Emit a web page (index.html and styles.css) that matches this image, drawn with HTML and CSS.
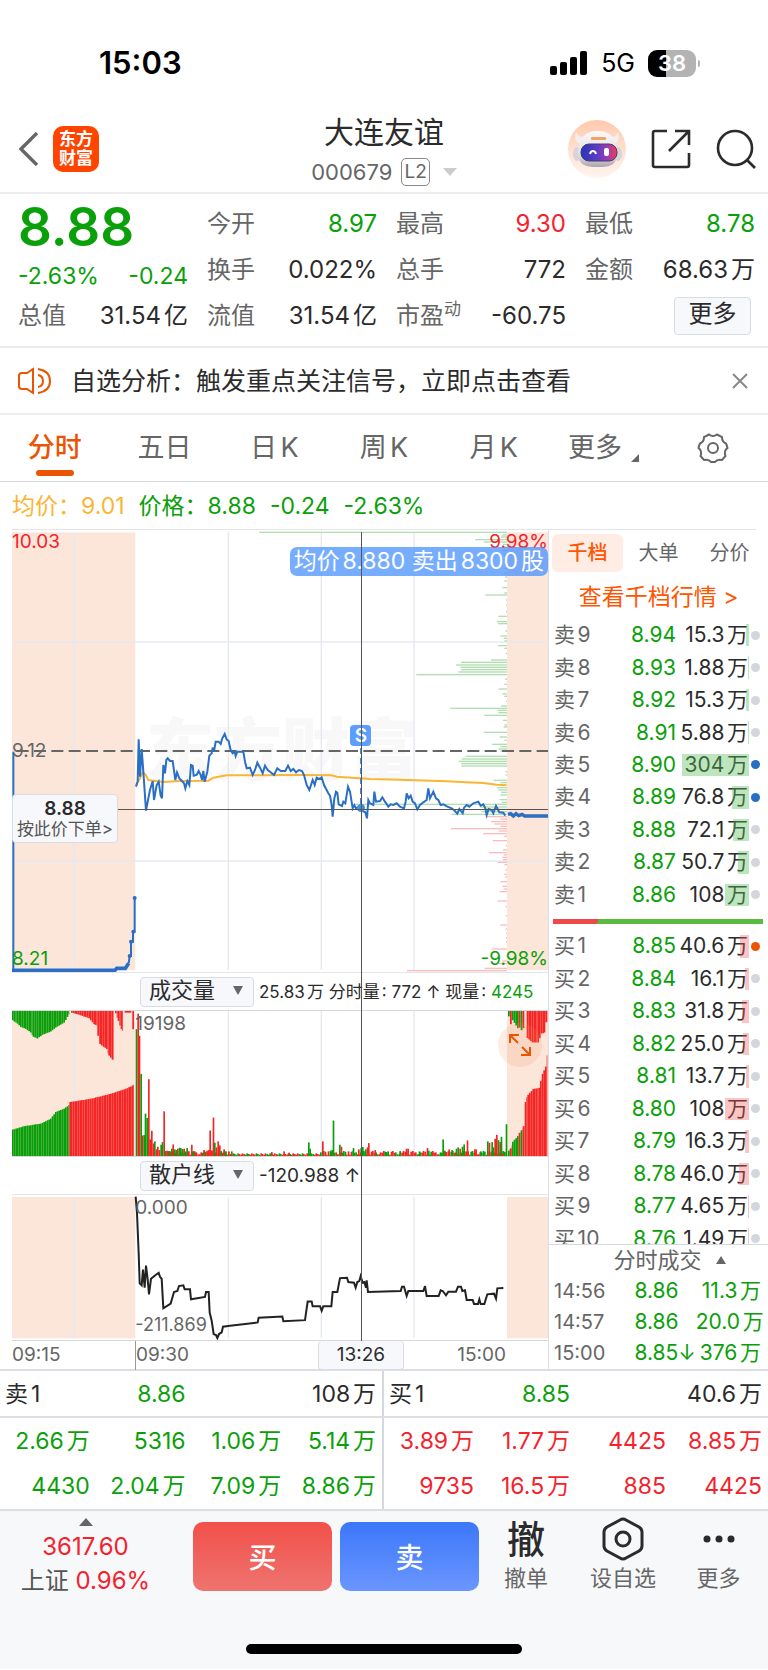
FILE: index.html
```html
<!DOCTYPE html>
<html lang="zh-CN">
<head>
    <meta charset="UTF-8">
    <meta name="viewport" content="width=device-width, initial-scale=1.0">
    <title>大连友谊 000679</title>
    <link rel="stylesheet" href="styles.css">
</head>
<body>
    <div class="status-bar">
        <span class="clock">15:03</span>
        <div class="status-icons">
            <svg width="38" height="24" viewBox="0 0 38 24">
                <rect x="0" y="15" width="7" height="9" rx="2"/>
                <rect x="10" y="11" width="7" height="13" rx="2"/>
                <rect x="20" y="6" width="7" height="18" rx="2"/>
                <rect x="30" y="0" width="7" height="24" rx="2"/>
            </svg>
            <span class="network">5G</span>
            <span class="battery">38</span>
        </div>
    </div>

    <header class="header">
        <div class="header-left">
            <a href="#" class="back" aria-label="返回">
                <svg width="20" height="34" viewBox="0 0 20 34" fill="none" stroke="#666" stroke-width="3.4">
                    <path d="M18 1 2 17l16 16"/>
                </svg>
            </a>
            <a href="#" class="logo"><span>东方</span><span>财富</span></a>
        </div>
        <div class="stock-name">
            <h1>大连友谊</h1>
            <div class="stock-code">000679 <span class="level">L2</span><i class="caret-down"></i></div>
        </div>
        <div class="header-right">
            <a href="#" aria-label="智能助手">
                <svg width="58" height="58" viewBox="0 0 58 58">
                    <defs>
                        <linearGradient id="halo" x1="0" y1="0" x2="0" y2="1">
                            <stop offset="0" stop-color="#ffc9ad"/>
                            <stop offset="1" stop-color="#fff6f1"/>
                        </linearGradient>
                        <linearGradient id="helmet" x1="0" y1="0" x2="0" y2="1">
                            <stop offset="0" stop-color="#fbfafa"/>
                            <stop offset=".7" stop-color="#dedbdd"/>
                            <stop offset="1" stop-color="#aaa5aa"/>
                        </linearGradient>
                        <linearGradient id="visor" x1="0" y1="0" x2="1" y2="0">
                            <stop offset="0" stop-color="#2636b4"/>
                            <stop offset=".45" stop-color="#5a3cc4"/>
                            <stop offset=".75" stop-color="#a03bb0"/>
                            <stop offset="1" stop-color="#ef3f4c"/>
                        </linearGradient>
                    </defs>
                    <circle cx="29" cy="29" r="29" fill="url(#halo)"/>
                    <path d="M8 12c-2 6 0 12 6 12l5-9c-5 3-9 2-11-3zM50 12c2 6 0 12-6 12l-5-9c5 3 9 2 11-3z" fill="#f3eff0"/>
                    <ellipse cx="9" cy="34" rx="4" ry="7" fill="#d8d4d8"/>
                    <ellipse cx="50" cy="34" rx="4" ry="7" fill="#d8d4d8"/>
                    <path d="M10 32c0-13 7-21 20-21s19 8 19 21-6 15-19 15-20-2-20-15z" fill="url(#helmet)"/>
                    <rect x="23" y="17" width="15" height="3" rx="1" fill="#f2a263"/>
                    <rect x="13" y="24" width="36" height="17" rx="8" fill="url(#visor)" stroke="#493a76"/>
                    <path d="M22 34c1-4 5-4 6 0" fill="none" stroke="#fff" stroke-width="2"/>
                    <rect x="36" y="28" width="5" height="8" rx="2" fill="#fff"/>
                </svg>
            </a>
            <a href="#" aria-label="分享">
                <svg width="40" height="40" viewBox="0 0 40 40" fill="none" stroke="#2b2b2b" stroke-width="2.6">
                    <path d="M16 2H4Q2 2 2 4v32q0 2 2 2h32q2 0 2-2V24M24 2h14v14M38 2 18 22"/>
                </svg>
            </a>
            <a href="#" aria-label="搜索">
                <svg width="40" height="40" viewBox="0 0 40 40" fill="none" stroke="#2b2b2b" stroke-width="2.6">
                    <circle cx="19" cy="19" r="17"/>
                    <path d="m31 31 8 8"/>
                </svg>
            </a>
        </div>
    </header>

    <section class="quote">
        <div class="quote-main">
            <strong>8.88</strong>
            <div class="quote-change"><span>-2.63%</span><span>-0.24</span></div>
        </div>
        <dl class="q-open"><dt>今开</dt><dd class="down">8.97</dd></dl>
        <dl><dt>最高</dt><dd class="up">9.30</dd></dl>
        <dl><dt>最低</dt><dd class="down">8.78</dd></dl>
        <dl><dt>换手</dt><dd>0.022%</dd></dl>
        <dl><dt>总手</dt><dd>772</dd></dl>
        <dl><dt>金额</dt><dd>68.63万</dd></dl>
        <dl><dt>总值</dt><dd>31.54亿</dd></dl>
        <dl><dt>流值</dt><dd>31.54亿</dd></dl>
        <dl><dt>市盈<sup>动</sup></dt><dd>-60.75</dd></dl>
        <button type="button" class="more-btn">更多</button>
    </section>

    <div class="notice">
        <svg width="34" height="30" viewBox="0 0 34 30" fill="none" stroke="#ea5504" stroke-width="2">
            <path d="M15 3v24l-6-4H4q-3 0-3-3V10q0-3 3-3h5z"/>
            <path d="M20 9q5 1 5 6t-5 6M20 3q12 2 12 12T20 27"/>
        </svg>
        <a href="#">自选分析：触发重点关注信号，立即点击查看</a>
        <button type="button" aria-label="关闭">
            <svg width="16" height="16" viewBox="0 0 16 16" stroke="#888" stroke-width="2"><path d="m1 1 14 14M15 1 1 15"/></svg>
        </button>
    </div>

    <nav class="tabs">
        <a href="#" class="active">分时</a>
        <a href="#">五日</a>
        <a href="#">日K</a>
        <a href="#">周K</a>
        <a href="#">月K</a>
        <a href="#">更多<i class="corner"></i></a>
        <a href="#" aria-label="设置">
            <svg width="32" height="30" viewBox="0 0 32 30" fill="none" stroke="#666" stroke-width="2">
                <path d="M12 1.500q4 3 8 0l5 2.500q0 5 4 6.500 1 2 1.500 4.500-4 3-2 8l-3.500 4q-5-1-7 2h-4q-2-3-7-2l-3.500-4q2-5-2-8 .5-2.500 1.500-4.500 4-1.500 4-6.500z"/>
                <circle cx="16" cy="15" r="5"/>
            </svg>
        </a>
    </nav>

    <div class="legend">
        <span class="avg">均价：9.01</span>
        <span>价格：8.88</span>
        <span>-0.24</span>
        <span>-2.63%</span>
    </div>

    <main class="board">
        <section class="charts">
            <div class="chart price-chart">
                <span class="watermark">东方财富</span>
                <svg id="priceChart" viewBox="36 15 1608 1326" preserveAspectRatio="none"></svg>
                <span class="label top-left up">10.03</span>
                <span class="label top-right up">9.98%</span>
                <span class="label mid-left">9.12</span>
                <span class="label bottom-left down">8.21</span>
                <span class="label bottom-right down">-9.98%</span>
                <span class="trade-tip">均价8.880 卖出8300股</span>
                <span class="sell-mark">S</span>
                <i class="sell-line"></i>
                <i class="cross-h"></i>
                <button type="button" class="order-btn"><b>8.88</b>按此价下单&gt;</button>
            </div>
            <div class="chart-bar">
                <button type="button">成交量<i class="caret-down"></i></button>
                <span>25.83万 分时量: 772 ↑ 现量: <em>4245</em></span>
            </div>
            <div class="chart volume-chart">
                <svg id="volumeChart" viewBox="36 150 1608 438" preserveAspectRatio="none"></svg>
                <span class="label sub-top">19198</span>
                <button type="button" class="expand" aria-label="全屏">
                    <svg width="24" height="24" viewBox="0 0 24 24" fill="none" stroke="#ea5504" stroke-width="2"><path d="M2 10V2h9M2 2l8 8M22 14v8h-9M22 22l-8-8"/></svg>
                </button>
            </div>
            <div class="chart-bar retail-bar">
                <button type="button">散户线<i class="caret-down"></i></button>
                <span>-120.988 ↑</span>
            </div>
            <div class="chart retail-chart">
                <svg id="retailChart" viewBox="36 705 1608 438" preserveAspectRatio="none"></svg>
                <span class="label sub-top">0.000</span>
                <span class="label sub-bottom">-211.869</span>
            </div>
            <div class="time-axis">
                <span>09:15</span>
                <span class="open-time">09:30</span>
                <span class="cursor-time">13:26</span>
                <span class="close-time">15:00</span>
            </div>
            <i class="cross-v"></i>
        </section>

        <aside class="book">
            <nav class="book-tabs">
                <a href="#" class="active">千档</a>
                <a href="#">大单</a>
                <a href="#">分价</a>
            </nav>
            <a href="#" class="book-link">查看千档行情 &gt;</a>
            <table class="levels asks" id="asks"></table>
            <div class="ratio"><i></i></div>
            <div class="bids-clip">
                <table class="levels bids" id="bids"></table>
            </div>
            <h2>分时成交<i class="caret-up"></i></h2>
            <table class="ticks">
                <tr><td>14:56</td><td>8.86</td><td>11.3万</td></tr>
                <tr><td>14:57</td><td>8.86</td><td>20.0万</td></tr>
                <tr><td>15:00</td><td>8.85↓</td><td>376万</td></tr>
            </table>
        </aside>
    </main>

    <section class="queues">
        <table class="sell-queue">
            <tr class="queue-head"><th>卖1</th><td class="down">8.86</td><td colspan="2">108万</td></tr>
            <tr><td>2.66万</td><td>5316</td><td>1.06万</td><td>5.14万</td></tr>
            <tr><td>4430</td><td>2.04万</td><td>7.09万</td><td>8.86万</td></tr>
        </table>
        <table class="buy-queue">
            <tr class="queue-head"><th>买1</th><td class="down">8.85</td><td colspan="2">40.6万</td></tr>
            <tr><td>3.89万</td><td>1.77万</td><td>4425</td><td>8.85万</td></tr>
            <tr><td>9735</td><td>16.5万</td><td>885</td><td>4425</td></tr>
        </table>
    </section>

    <footer class="footer">
        <div class="actions">
            <a href="#" class="index">
                <i class="caret-up"></i>
                <span class="up">3617.60</span>
                <span>上证 <span class="up">0.96%</span></span>
            </a>
            <button type="button" class="trade buy">买</button>
            <button type="button" class="trade sell">卖</button>
            <a href="#" class="action"><span class="cancel">撤</span>撤单</a>
            <a href="#" class="action">
                <svg width="42" height="44" viewBox="0 0 42 44" fill="none" stroke="#2b2b2b" stroke-width="3">
                    <path d="M18 3q3-2 6 0l13 7q3 2 3 5v14q0 3-3 5l-13 7q-3 2-6 0L5 34q-3-2-3-5V15q0-3 3-5z"/>
                    <circle cx="21" cy="22" r="7"/>
                </svg>设自选
            </a>
            <a href="#" class="action">
                <svg width="34" height="44" viewBox="0 0 34 44" fill="#2b2b2b">
                    <circle cx="5" cy="22" r="3.500"/><circle cx="17" cy="22" r="3.500"/><circle cx="29" cy="22" r="3.500"/>
                </svg>更多
            </a>
        </div>
        <div class="home-bar"></div>
    </footer>

    <script src="script.js"></script>
</body>
</html>
```
FILE: styles.css
```css
* {
    box-sizing: border-box;
}
body {
    font-family: Inter, "Noto Sans CJK SC", sans-serif;
    font-size: 24px;
    line-height: 30px;
    margin: 0;
    background-color: #fff;
    color: #2b2b2b;
    text-autospace: normal;
}
a {
    color: inherit;
    text-decoration: none;
}
button {
    font-family: inherit;
    color: inherit;
    padding: 0;
    border: none;
    background: none;
    cursor: pointer;
}
svg {
    display: block;
}
table {
    border-collapse: collapse;
    width: 100%;
    table-layout: fixed;
}
td, th {
    padding: 0;
    font-weight: normal;
    text-align: right;
    white-space: nowrap;
}
.up {
    color: #f5222d;
}
.down {
    color: #0aa00a;
}
.caret-down, .caret-up {
    display: inline-block;
    border: 5px solid transparent;
}
.caret-down {
    border-top: 9px solid #666;
    border-bottom: 0;
}
.caret-up {
    border-bottom: 8px solid #666;
    border-top: 0;
}

/* status bar */
.status-bar {
    display: flex;
    justify-content: space-between;
    align-items: center;
    height: 106px;
    padding: 20px 72px 0 99px;
    color: #000;
}
.clock {
    font-size: 31px;
    font-weight: 600;
}
.status-icons {
    display: flex;
    align-items: center;
    gap: 13px;
}
.network {
    font-size: 25px;
}
.battery {
    position: relative;
    width: 48px;
    height: 27px;
    border-radius: 9px;
    background: linear-gradient(90deg, #000 38%, #b3b3b3 38%);
    color: #fff;
    font-size: 22px;
    font-weight: 600;
    line-height: 27px;
    text-align: center;
}
.battery::after {
    content: "";
    position: absolute;
    right: -4px;
    top: 10px;
    width: 2px;
    height: 7px;
    border-radius: 0 2px 2px 0;
    background: #b3b3b3;
}

/* header */
.header {
    display: grid;
    grid-template-columns: 1fr auto 1fr;
    align-items: center;
    height: 88px;
    padding: 0 12px;
    border-bottom: 2px solid #ededed;
}
.header-left, .header-right {
    display: flex;
    align-items: center;
}
.header-left {
    gap: 14px;
    padding: 0 7px;
}
.header-right {
    justify-content: flex-end;
    gap: 25px;
}
.logo {
    display: flex;
    flex-direction: column;
    justify-content: center;
    align-items: center;
    width: 46px;
    height: 46px;
    border-radius: 10px;
    background: #ff4400;
    color: #fff;
    font-size: 17px;
    font-weight: bold;
    line-height: 19px;
}
.stock-name {
    text-align: center;
}
h1 {
    margin: 0;
    font-size: 30px;
    font-weight: normal;
    line-height: 46px;
}
.stock-code {
    display: flex;
    align-items: center;
    gap: 9px;
    height: 34px;
    color: #666;
    font-size: 22px;
}
.level {
    padding: 0 2px;
    border: 1px solid #888;
    border-radius: 5px;
    font-size: 19px;
    line-height: 26px;
}
.stock-code .caret-down {
    margin-left: 4px;
    border-width: 8px 7px 0;
    border-top-color: #ccc;
}

/* quote */
.quote {
    display: grid;
    grid-template-columns: repeat(4, 1fr);
    grid-auto-rows: 46px;
    column-gap: 19px;
    height: 154px;
    padding: 7px 13px 0 18px;
    border-bottom: 2px solid #ebedf0;
}
.quote-main {
    grid-row: span 2;
    color: #0aa00a;
}
.quote-main strong {
    display: block;
    font-size: 53px;
    font-weight: 600;
    line-height: 52px;
}
.quote-change {
    display: flex;
    justify-content: space-between;
    padding-top: 8px;
    font-size: 23px;
}
.quote dl {
    display: flex;
    justify-content: space-between;
    align-items: center;
    margin: 0;
}
.quote dt {
    color: #666;
    font-size: 24px;
    white-space: nowrap;
}
.quote dd {
    margin: 0;
    white-space: nowrap;
}
.quote sup {
    font-size: 17px;
    line-height: 0;
}
.more-btn {
    justify-self: end;
    align-self: center;
    width: 77px;
    height: 38px;
    margin-right: 4px;
    padding-bottom: 4px;
    border: 1px solid #d9dce3;
    border-radius: 4px;
    background: #f7f8fb;
    font-size: 24px;
    line-height: 30px;
}

/* notice */
.notice {
    display: flex;
    align-items: center;
    height: 67px;
    padding: 0 20px 0 18px;
    border-bottom: 2px solid #ebedf0;
    font-size: 25px;
}
.notice a {
    flex: 1;
    padding-left: 19px;
}

/* tabs */
.tabs {
    display: grid;
    grid-template-columns: repeat(7, 1fr);
    height: 67px;
    border-bottom: 1px solid #d5d8df;
    color: #666;
    font-size: 27px;
}
.tabs a {
    display: flex;
    justify-content: center;
    align-items: center;
    position: relative;
}
.tabs .active {
    color: #ea5504;
    font-weight: 500;
}
.tabs .active::after {
    content: "";
    position: absolute;
    bottom: 5px;
    width: 38px;
    height: 6px;
    border-radius: 3px;
    background: #ea5504;
}
.corner {
    align-self: flex-end;
    margin: 0 0 19px 9px;
    border-left: 8px solid transparent;
    border-bottom: 8px solid #666;
}
.legend {
    display: flex;
    gap: 14px;
    padding: 9px 0 8px;
    margin: 0 12px;
    border-bottom: 1px solid #e3e5ea;
    color: #0aa00a;
    font-size: 23px;
}
.legend .avg {
    color: #fbb534;
}

/* charts */
.board {
    display: grid;
    grid-template-columns: minmax(0, 549fr) minmax(0, 219fr);
    border-bottom: 2px solid #dcdee4;
}
.charts {
    position: relative;
    padding-left: 12px;
    border-right: 1px solid #dcdee4;
}
.chart {
    position: relative;
}
.chart > svg {
    position: relative;
    width: 100%;
    height: 100%;
}
.price-chart {
    height: 443px;
    border-bottom: 1px solid #e3e5ea;
}
.volume-chart {
    height: 147px;
    border-top: 1px solid #d5d8df;
    border-bottom: 1px solid #d5d8df;
}
.retail-chart {
    height: 147px;
    border-top: 1px solid #e3e5ea;
    border-bottom: 1px solid #d5d8df;
}
.label {
    position: absolute;
    color: #666;
    font-size: 19px;
    line-height: 22px;
}
.label.up {
    color: #f5222d;
}
.label.down {
    color: #0aa00a;
}
.top-left {
    left: 0;
    top: 1px;
}
.top-right {
    right: 0;
    top: 1px;
}
.mid-left {
    left: 0;
    top: 210px;
}
.bottom-left {
    left: 0;
    bottom: 2px;
}
.bottom-right {
    right: 0;
    bottom: 2px;
}
.sub-top {
    left: 23%;
    top: 2px;
}
.sub-bottom {
    left: 23%;
    bottom: 4px;
    font-size: 18px;
}
.watermark {
    position: absolute;
    left: 25%;
    top: 170px;
    color: #f8f8f8;
    font-size: 68px;
    font-weight: 900;
    line-height: 100px;
}
.trade-tip {
    position: absolute;
    right: 0;
    top: 17px;
    padding: 0 4px;
    border-radius: 7px;
    background: rgba(77, 148, 255, 0.77);
    color: #fff;
    font-size: 23px;
    line-height: 29px;
    white-space: nowrap;
}
.sell-mark {
    position: absolute;
    left: 65%;
    top: 195px;
    width: 21px;
    margin-left: -10px;
    border-radius: 4px;
    background: #5c9eff;
    color: #fff;
    font-size: 19px;
    font-weight: 600;
    line-height: 21px;
    text-align: center;
}
.sell-line {
    position: absolute;
    left: 65%;
    top: 218px;
    height: 56px;
    border-left: 2px dashed #3f8cf0;
}
.sell-line::after {
    content: "";
    position: absolute;
    left: -5px;
    bottom: -8px;
    width: 8px;
    height: 8px;
    border-radius: 50%;
    background: #4a90e2;
}
.cross-h, .cross-v {
    position: absolute;
    background: #555;
}
.cross-h {
    left: 0;
    right: 0;
    top: 279px;
    height: 1px;
}
.cross-v {
    left: 66%;
    top: 2px;
    bottom: 28px;
    width: 1px;
    margin-left: -1px;
}
.order-btn {
    position: absolute;
    left: 0;
    top: 264px;
    width: 106px;
    height: 49px;
    border: 1px solid #d9dce3;
    border-radius: 4px;
    background: #f7f8fb;
    color: #555;
    font-size: 17px;
    line-height: 20px;
    white-space: nowrap;
}
.order-btn b {
    display: block;
    color: #2b2b2b;
    font-size: 19px;
    font-weight: 600;
}
.chart-bar {
    display: flex;
    align-items: center;
    gap: 5px;
    height: 37px;
    padding-left: 128px;
    font-size: 17px;
    white-space: nowrap;
}
.chart-bar button {
    display: flex;
    justify-content: space-between;
    align-items: center;
    width: 114px;
    height: 30px;
    padding: 0 10px 3px 8px;
    border: 1px solid #d9dce3;
    border-radius: 4px;
    background: #f7f8fb;
    font-size: 22px;
    line-height: 26px;
}
.chart-bar em {
    color: #0aa00a;
    font-style: normal;
}
.retail-bar {
    font-size: 19px;
}
.expand {
    position: absolute;
    right: 6px;
    top: 12px;
    display: flex;
    justify-content: center;
    align-items: center;
    width: 44px;
    height: 44px;
    border-radius: 50%;
    background: rgba(240, 140, 90, 0.17);
}
.time-axis {
    display: grid;
    grid-template-columns: 123fr 183fr 86fr 144fr;
    height: 28px;
    color: #666;
    font-size: 19px;
    line-height: 28px;
}
.open-time {
    border-left: 1px solid #999;
}
.cursor-time {
    border: 1px solid #d9dce3;
    border-top: 0;
    border-radius: 4px;
    background: #f7f8fb;
    color: #2b2b2b;
    text-align: center;
}
.close-time {
    padding-right: 42px;
    text-align: right;
}

/* order book */
.book {
    display: flex;
    flex-direction: column;
    font-size: 21px;
}
.book-tabs {
    display: grid;
    grid-template-columns: repeat(3, 1fr);
    height: 38px;
    margin: 4px 3px 0;
    color: #666;
    font-size: 20px;
    line-height: 38px;
    text-align: center;
}
.book-tabs .active {
    border-radius: 6px;
    background: #ffede5;
    color: #ff5500;
    font-weight: 500;
}
.book-link {
    height: 47px;
    color: #ff5500;
    font-size: 23px;
    line-height: 51px;
    text-align: center;
}
.levels td:nth-child(1), .ticks td:nth-child(1) {
    padding-left: 5px;
    color: #666;
    text-align: left;
}
.levels td:nth-child(2) {
    color: #0aa00a;
}
.levels tr > :nth-child(1) {
    width: 28%;
}
.levels tr > :nth-child(2) {
    width: 30%;
}
.levels tr > :nth-child(4) {
    width: 19px;
}
.levels {
    line-height: 24px;
}
.asks {
    height: 292px;
}
.volume {
    position: relative;
}
.volume span {
    padding-right: 1px;
}
.volume i {
    position: absolute;
    right: 0;
    top: 5px;
    bottom: 5px;
    background: rgba(92, 192, 92, 0.4);
}
.bids .volume i {
    background: rgba(245, 90, 90, 0.35);
}
.dot {
    display: block;
    width: 9px;
    height: 9px;
    margin-left: 2px;
    border-radius: 50%;
    background: #d3d6dc;
}
.dot.blue {
    background: #2b6fc4;
}
.dot.orange {
    background: #ea5504;
}
.ratio {
    height: 5px;
    margin: 8px 5px 6px 4px;
    background: #59bb40;
}
.ratio i {
    display: block;
    width: 22%;
    height: 5px;
    background: #ec4a4a;
    clip-path: polygon(0 0, 100% 0, 94% 100%, 0 100%);
}
.bids-clip {
    height: 315px;
    overflow: hidden;
    border-bottom: 1px solid #d5d8df;
}
.bids {
    height: 325px;
}
.book h2 {
    margin: 0;
    padding-left: 22px;
    color: #666;
    font-size: 22px;
    font-weight: normal;
    line-height: 31px;
    text-align: center;
}
.book h2 .caret-up {
    margin: 0 0 4px 14px;
}
.ticks {
    height: 92px;
    color: #0aa00a;
    font-size: 21px;
    line-height: 24px;
}
.ticks td:last-child {
    padding-right: 7px;
}
.ticks td:nth-child(1) {
    width: 39%;
    font-size: 20px;
}
.ticks td:nth-child(2) {
    width: 28%;
    text-align: left;
}

/* queues */
.queues {
    display: grid;
    grid-template-columns: 1fr 1fr;
    border-bottom: 2px solid #dcdee4;
    font-size: 23px;
}
.queues tr {
    height: 46px;
}
.queues td {
    padding-right: 6px;
}
.sell-queue {
    border-right: 2px solid #d5d8df;
    color: #0aa00a;
}
.buy-queue {
    color: #f5222d;
}
.queues .queue-head {
    border-bottom: 2px solid #dcdee4;
    color: #2b2b2b;
}
.queue-head th {
    padding-left: 5px;
    text-align: left;
}
.queue-head .down {
    color: #0aa00a;
}

/* footer */
.footer {
    display: flex;
    flex-direction: column;
    justify-content: space-between;
    height: 158px;
    padding-bottom: 15px;
    background: #f7f8fa;
}
.actions {
    display: grid;
    grid-template-columns: 185fr 139fr 139fr 78fr 100fr 75fr;
    column-gap: 8px;
    padding: 11px 12px 0 0;
}
.index {
    display: flex;
    flex-direction: column;
    align-items: center;
    padding-right: 14px;
    color: #555;
    font-size: 24px;
    line-height: 34px;
    margin-top: -4px;
}
.index .caret-up {
    border-width: 0 7px 8px;
    margin-bottom: 4px;
}
.trade {
    height: 69px;
    padding-bottom: 2px;
    border-radius: 10px;
    color: #fff;
    font-size: 28px;
    font-weight: 500;
}
.buy {
    background: linear-gradient(#f2504a, #ee746f);
}
.sell {
    background: linear-gradient(#3c77f9, #6a96ff);
}
.action {
    display: flex;
    flex-direction: column;
    align-items: center;
    margin-top: -5px;
    color: #666;
    font-size: 22px;
    line-height: 34px;
    white-space: nowrap;
}
.cancel {
    color: #2b2b2b;
    font-size: 38px;
    font-weight: 500;
    line-height: 44px;
}
.home-bar {
    width: 36%;
    height: 10px;
    margin: 0 auto;
    border-radius: 5px;
    background: #000;
}
```
FILE: script.js
```js
const RED = '#f52525';
const GREEN = '#0a9f0a';

function line(points, color, width, extra = '') {
    return `<polyline points="${points}" fill="none" stroke="${color}" stroke-width="${width}" ${extra}/>`;
}

function rect(x, y, w, h, color) {
    return `<rect x="${x}" y="${y}" width="${w}" height="${h}" fill="${color}"/>`;
}

// shaded auction sessions and the hourly grid
function backdrop(top, height) {
    let out = rect(36, top, 370, height, '#fce6da') + rect(1521, top, 123, height, '#fce6da');
    [222, 685, 964, 1242].forEach(x => { out += rect(x - 2, top, 4, height, '#e4e8ef'); });
    return out;
}

const price = `408,785 413,770 416,643 420,755 425,672 430,740 438,857 445,820 450,795 458,768 462,825 470,780
476,770 482,812 486,820 490,720 495,745 499,705 503,700 510,708 518,708 526,765 531,742 538,760 546,768 552,775
556,790 562,768 568,780 573,720 578,722 581,752 590,750 596,738 602,750 606,765 610,738 614,770 622,740 628,692
635,685 638,668 642,680 647,650 656,650 662,657 667,640 674,627 680,643 686,648 692,675 698,685 704,680 707,693
712,680 730,680 735,710 740,730 750,728 758,750 765,735 772,713 780,728 788,745 795,722 803,735 812,742 822,750
832,730 842,738 856,738 864,722 872,738 880,732 888,742 897,735 906,738 912,750 920,780 928,795 938,765 944,780
950,758 958,762 965,757 972,780 985,805 990,812 995,840 998,875 1003,820 1008,800 1012,803 1016,838 1026,843
1030,830 1036,835 1044,785 1050,800 1058,850 1063,840 1068,850 1076,845 1080,855 1096,862 1101,880 1105,825
1110,835 1120,840 1123,800 1128,830 1140,828 1147,817 1155,830 1165,845 1172,838 1180,840 1190,835 1200,845
1212,850 1217,830 1220,805 1226,820 1232,812 1238,830 1245,835 1252,853 1260,840 1270,832 1280,825 1285,790
1290,820 1300,800 1308,820 1315,825 1322,840 1330,838 1342,845 1355,850 1362,855 1372,866 1378,852 1388,865
1392,848 1400,840 1408,845 1420,835 1435,830 1442,842 1450,838 1456,850 1460,870 1466,852 1475,855 1480,865
1488,843 1498,862 1510,863 1516,872`;

const average = `408,780 420,760 428,742 436,748 445,765 490,771 540,768 625,767 640,758 680,751 780,751 900,750
995,751 1010,755 1080,760 1110,762 1200,764 1340,769 1400,772 1450,774 1490,779 1520,781`;

// resting orders by price: [y, length]
const askDepth = [[22,743],[30,15],[36,18],[44,95],[51,70],[58,12],[66,10],[76,14],[90,10],[104,12],[118,8],[130,10],
[144,8],[156,6],[168,8],[188,14],[204,8],[210,65],[225,3],[240,3],[260,3],[274,26],[290,30],[296,27],[318,5],
[333,20],[340,10],[348,8],[362,27],[370,8],[385,4],[405,48],[412,138],[420,153],[427,140],[434,138],[441,146],
[449,272],[463,6],[478,8],[492,25],[507,14],[514,8],[528,3],[543,18],[550,171],[556,28],[563,26],[571,68],
[586,12],[600,8],[606,10],[622,70],[636,22],[646,8],[658,45],[665,20],[672,26],[678,20],[694,124],[702,136],
[709,145],[716,137],[723,137],[740,4],[750,4],[766,40],[773,20],[788,30],[795,26],[802,18],[810,20],[824,22],
[832,16],[838,455],[846,80],[853,70],[860,76],[868,167]];
const bidDepth = [[875,60],[882,20],[890,48],[897,38],[904,20],[911,168],[918,25],[926,72],[934,8],[947,43],[962,4],
[975,12],[983,54],[990,10],[997,14],[1004,12],[1012,28],[1019,8],[1034,4],[1048,8],[1056,6],[1070,20],[1084,14],
[1092,10],[1100,22],[1128,28],[1145,4],[1172,4],[1200,20],[1212,4],[1225,3],[1238,3],[1250,3],[1272,45],[1308,14],
[1316,25],[1330,67],[1337,300]];

let html = backdrop(22, 1313);
html += rect(36, 349, 1608, 4, '#e4e8ef') + rect(36, 1006, 1608, 4, '#e4e8ef');
askDepth.forEach(([y, w]) => { html += rect(1521 - w, y - 2, w, 4, '#b0dfb0'); });
bidDepth.forEach(([y, w]) => { html += rect(1521 - w, y - 2, w, 4, '#fcbcbc'); });
html += line('50,678 1644,678', '#666', 6, 'stroke-dasharray="36 16"');
html += line(average, '#fbb534', 6);
html += line(price, '#2b6fc4', 6);
html += line('40,680 40,1336', '#2b6fc4', 6);
html += line('36,1336 345,1336 350,1330 376,1330 386,1315', '#2b6fc4', 11);
html += line('386,1315 389,1293 393,1293 393,1250 399,1250 399,1220 404,1220 404,1115', '#2b6fc4', 6);
[[389,1293],[393,1250],[400,1220],[404,1119]].forEach(([x, y]) => {
    html += `<circle cx="${x}" cy="${y}" r="6" fill="#2b6fc4"/>`;
});
html += line('1524,868 1532,866 1540,873 1548,866 1556,872 1566,868 1574,873 1644,873', '#2b6fc4', 10);
document.getElementById('priceChart').innerHTML = html;

// continuous session volume: [x, height, red]
const spikes = [[409,383,0],[414,430,1],[418,363,1],[423,248,0],[427,62,1],[432,63,0],[436,128,0],[441,115,0],
[446,232,1],[450,50,1],[455,76,1],[460,38,1],[464,44,0],[469,20,1],[473,28,1],[478,18,1],[483,34,0],[487,42,0],
[492,135,1],[497,15,0],[501,16,1],[506,15,0],[510,14,1],[515,22,0],[519,35,1],[524,20,0],[529,18,0],[533,22,1],
[538,25,0],[542,24,0],[547,21,0],[552,22,1],[556,12,0],[561,24,0],[565,14,1],[575,34,1],[579,12,0],[584,14,1],
[612,18,1],[621,16,1],[626,18,1],[630,77,1],[635,17,1],[640,116,1],[644,40,0],[649,26,1],[654,44,1],[659,32,1],
[663,15,0],[672,20,1],[677,14,0],[686,12,1],[695,14,0],[815,12,1],[852,14,1],[867,10,1],[926,41,0],[930,22,0],
[968,44,1],[991,16,0],[996,18,0],[1000,107,0],[1019,34,0],[1024,28,1],[1060,24,0],[1076,20,1],[1083,24,0],
[1088,27,0],[1097,20,0],[1102,26,1],[1106,39,1],[1125,18,1],[1160,12,0],[1200,15,0],[1219,22,1],[1224,22,1],
[1258,14,0],[1282,24,1],[1286,16,0],[1329,50,0],[1334,16,0],[1338,12,1],[1347,20,1],[1356,18,0],[1369,22,0],
[1374,26,0],[1380,22,1],[1387,28,0],[1392,35,0],[1398,14,1],[1402,47,1],[1424,20,1],[1428,20,1],[1442,14,0],
[1463,44,0],[1468,40,1],[1476,42,0],[1480,26,0],[1485,52,1],[1490,64,1],[1495,48,0],[1500,42,1],[1504,58,0],
[1509,6,1],[1519,96,0]];

// auction bars follow a stepped outline: [x, y] pairs, drawn to the given base
function profile(points, base, color) {
    let out = '';
    for (let i = 0; i < points.length - 1; i++) {
        const [x1, y1] = points[i];
        const [x2, y2] = points[i + 1];
        for (let x = x1; x < x2; x += 5) {
            const y = Math.round(y1 + (y2 - y1) * (x - x1) / (x2 - x1));
            out += rect(x, Math.min(y, base), Math.min(5, x2 - x), Math.abs(base - y), color);
        }
    }
    return out;
}

html = backdrop(150, 438);
for (let i = 0; i < 222; i++) {
    const quiet = i > 40 && i < 100 ? 6 : 13;
    const h = 4 + (i * 7 + i * i * 3) % quiet;
    html += rect(500 + Math.round(i * 4.6), 588 - h, 5, h, (i * i + i) % 7 < 3 ? RED : GREEN);
}
spikes.forEach(([x, h, red]) => { html += rect(x - 2, 588 - h, 5, h, red ? RED : GREEN); });
html += profile([[36,178],[50,188],[60,198],[75,204],[90,215],[98,228],[110,233],[125,222],[150,212],[165,200],[190,185],[208,155]], 150, GREEN);
html += profile([[213,155],[240,163],[265,172],[280,190],[291,195],[292,225],[298,250],[318,265],[325,285],[335,297],[341,297]], 150, RED);
html += profile([[345,157],[353,180],[362,205],[369,212]], 150, RED) + rect(374, 150, 20, 5, RED) + rect(397, 150, 5, 55, RED);
html += profile([[36,508],[70,498],[120,490],[150,475],[165,455],[190,445],[208,432]], 588, GREEN);
html += profile([[208,425],[270,415],[330,400],[375,385],[402,372]], 588, RED);
html += profile([[1524,166],[1530,168]], 150, GREEN) + profile([[1530,190],[1536,190]], 150, RED);
html += profile([[1536,178],[1556,210]], 150, GREEN) + profile([[1556,200],[1562,200]], 150, RED);
html += profile([[1562,208],[1568,208]], 150, GREEN) + profile([[1568,202],[1573,202]], 150, RED);
html += profile([[1580,232],[1595,245],[1612,245],[1622,218],[1632,215],[1636,184],[1642,184]], 150, RED);
html += profile([[1524,572],[1530,566]], 588, GREEN) + profile([[1530,565],[1536,555]], 588, RED);
html += profile([[1536,545],[1556,522]], 588, GREEN) + profile([[1556,518],[1562,515]], 588, RED);
html += profile([[1562,510],[1568,505]], 588, GREEN);
html += profile([[1568,498],[1573,498],[1574,425],[1582,403],[1597,386],[1615,382],[1625,340],[1635,318],[1642,270]], 588, RED);
document.getElementById('volumeChart').innerHTML = html;

const retail = `407,710 411,760 416,880 419,972 425,978 429,930 434,985 438,918 443,960 447,1005 453,958 465,948
476,940 480,952 485,958 490,1047 512,1033 522,998 532,995 537,980 550,978 554,990 570,990 573,1020 615,1013
618,998 626,998 629,1060 635,1085 641,1125 648,1128 652,1137 657,1125 665,1120 669,1103 690,1100 773,1090
776,1076 847,1072 850,1086 915,1083 923,1027 935,1027 938,1041 960,1041 965,1055 970,1041 994,1041 998,998
1012,998 1020,956 1041,955 1045,968 1062,970 1067,985 1072,968 1078,965 1082,950 1088,970 1093,968 1098,985
1100,963 1104,998 1202,995 1206,982 1212,982 1220,1010 1225,995 1270,995 1275,980 1280,1010 1316,1010 1322,993
1328,995 1338,1008 1345,997 1368,997 1374,982 1383,982 1387,995 1395,993 1400,1022 1418,1022 1422,1034
1434,1034 1438,1020 1442,1034 1453,1034 1462,1005 1482,1003 1488,1018 1492,987 1510,986`;
document.getElementById('retailChart').innerHTML = backdrop(711, 427) + line(retail, '#222', 6);

// order book: label, price, volume, bar percent, dot
const asks = [['卖9','8.94','15.3万',4],['卖8','8.93','1.88万',1],['卖7','8.92','15.3万',4],['卖6','8.91','5.88万',2],
['卖5','8.90','304万',92,'blue'],['卖4','8.89','76.8万',23,'blue'],['卖3','8.88','72.1万',22],['卖2','8.87','50.7万',15],
['卖1','8.86','108万',33]];
const bids = [['买1','8.85','40.6万',12,'orange'],['买2','8.84','16.1万',5],['买3','8.83','31.8万',10],['买4','8.82','25.0万',8],
['买5','8.81','13.7万',4],['买6','8.80','108万',33],['买7','8.79','16.3万',5],['买8','8.78','46.0万',14],
['买9','8.77','4.65万',2],['买10','8.76','1.49万',1]];

function rows(levels) {
    return levels.map(([name, value, volume, percent, dot = '']) => `<tr>
        <td>${name}</td><td>${value}</td>
        <td class="volume"><span>${volume}</span><i style="width: ${percent}%"></i></td>
        <td><b class="dot ${dot}"></b></td>
    </tr>`).join('');
}
document.getElementById('asks').innerHTML = rows(asks);
document.getElementById('bids').innerHTML = rows(bids);
```
